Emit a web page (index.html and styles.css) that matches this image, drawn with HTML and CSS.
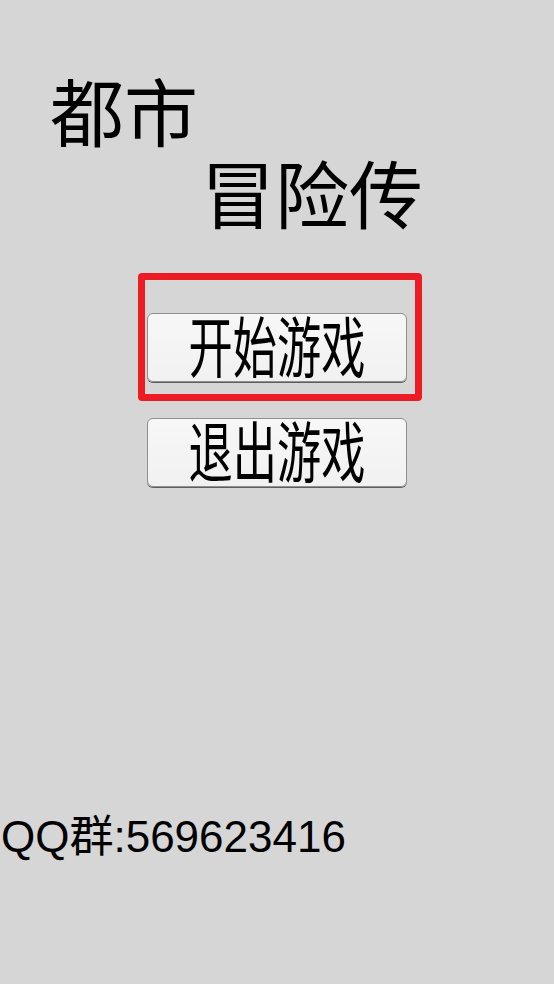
FILE: index.html
```html
<!DOCTYPE html>
<html lang="zh-CN">
<head>
<meta charset="utf-8">
<title>都市冒险传</title>
<link rel="stylesheet" href="styles.css">
</head>
<body>
  <main class="screen">
    <h1 class="title">
      <span class="title-line first">都市</span>
      <span class="title-line second">冒险传</span>
    </h1>

    <nav class="menu">
      <div class="highlight">
        <button class="btn" type="button"><span class="btn-label">开始游戏</span></button>
      </div>
      <button class="btn btn-quit" type="button"><span class="btn-label">退出游戏</span></button>
    </nav>

    <p class="qq">QQ群:569623416</p>
  </main>
</body>
</html>
```
FILE: styles.css
```css
html, body {
  margin: 0;
  padding: 0;
}

body {
  background: #d6d6d6;
  color: #000;
  font-family: "Noto Sans CJK SC", "Noto Sans", sans-serif;
}

.screen {
  width: 554px;
  height: 984px;
  display: flex;
  flex-direction: column;
  overflow: hidden;
}

/* two-line game title, second line pushed right */
.title {
  margin: 0;
  padding-top: 68px;
  font-size: 74px;
  font-weight: 400;
  line-height: 82px;
}

.title-line {
  display: block;
}

.title-line.first {
  padding-left: 50px;
}

.title-line.second {
  padding-left: 201px;
}

/* menu buttons */
.menu {
  margin-top: 41px;
  padding-left: 138px;
  display: flex;
  flex-direction: column;
  align-items: flex-start;
}

.highlight {
  border: 7px solid #ed1c24;
  border-radius: 4px;
  padding: 33px 8px 12px 2px;
}

.btn {
  width: 260px;
  height: 69px;
  padding: 0;
  margin: 0;
  display: flex;
  align-items: center;
  justify-content: center;
  background: linear-gradient(#f7f7f7, #f1f1f1);
  border: 1px solid #8f8f8f;
  border-radius: 6px;
  box-shadow: 0 1px 0 #5e5e5e;
  font-family: "Noto Sans CJK SC", sans-serif;
  color: #000;
  cursor: pointer;
}

.btn-quit {
  margin-top: 17px;
  margin-left: 9px;
}

.btn-label {
  display: inline-block;
  font-size: 66px;
  line-height: 1;
  transform: translateY(-5px) scaleX(0.67);
  white-space: nowrap;
}

.qq {
  margin: auto 0 122px 0;
  padding-left: 1px;
  font-family: "Liberation Sans", Arial, "Noto Sans CJK SC", sans-serif;
  font-size: 44px;
  line-height: 50px;
}
```
